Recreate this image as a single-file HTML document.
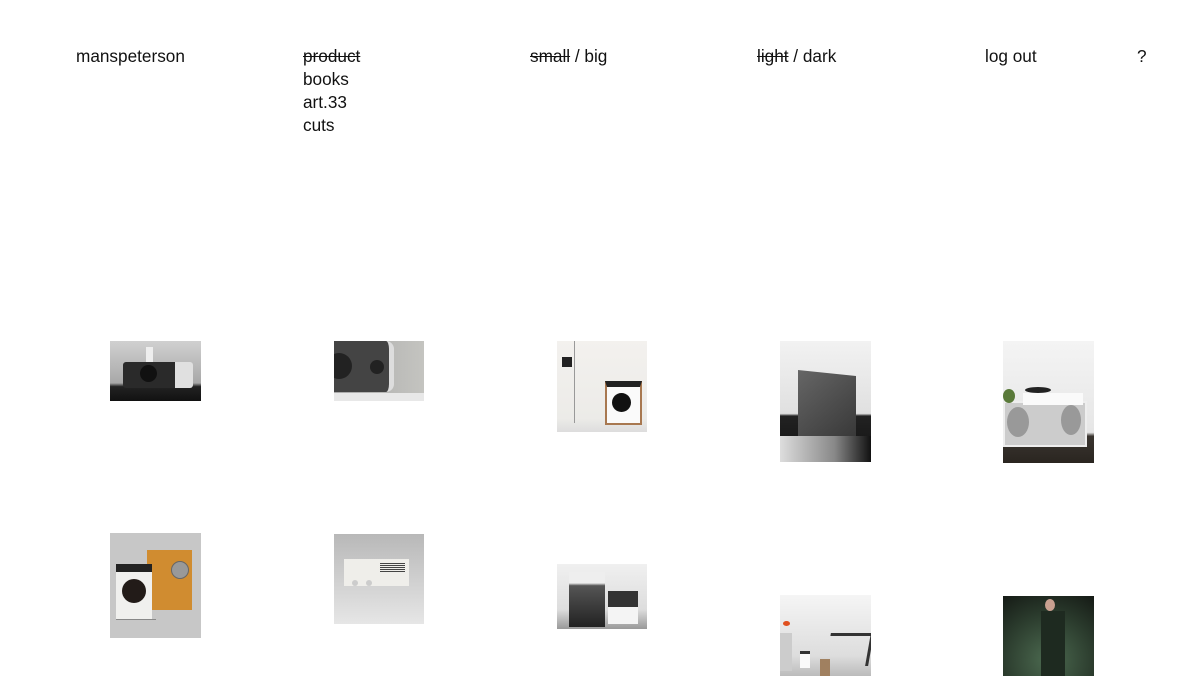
<!DOCTYPE html>
<html><head><meta charset="utf-8"><style>
body{margin:0;width:1200px;height:676px;background:#fff;overflow:hidden;position:relative;font-family:"Liberation Sans",sans-serif;font-size:17.2px;color:#111}
.t{position:absolute;line-height:23px}
s{text-decoration:line-through}
.i{position:absolute;overflow:hidden}
.i div{position:absolute}
</style></head><body>
<div class="t" style="left:76px;top:45px">manspeterson</div>
<div class="t" style="left:303px;top:45px"><s>product</s><br>books<br>art.33<br>cuts</div>
<div class="t" style="left:530px;top:45px"><s>small</s> / big</div>
<div class="t" style="left:757px;top:45px"><s>light</s> / dark</div>
<div class="t" style="left:985px;top:45px">log out</div>
<div class="t" style="left:1137px;top:45px">?</div>

<!-- 1 -->
<div class="i" style="left:110px;top:341px;width:91px;height:60px;background:linear-gradient(#d0d0d0,#a8a8a8 70%,#222 76%,#111)">
<div style="left:13px;top:21px;width:52px;height:26px;background:#2a2a2a;border-right:18px solid #e0e0e0;border-radius:3px"></div>
<div style="left:30px;top:24px;width:17px;height:17px;border-radius:50%;background:#111"></div>
<div style="left:36px;top:6px;width:7px;height:15px;background:#eee"></div>
</div>
<!-- 2 -->
<div class="i" style="left:334px;top:341px;width:90px;height:60px;background:linear-gradient(90deg,#aaa,#c4c4c0)">
<div style="left:0;top:0;width:55px;height:51px;background:#444;border-radius:0 8px 8px 0;border-right:5px solid #ddd"></div>
<div style="left:-8px;top:12px;width:26px;height:26px;border-radius:50%;background:#222"></div>
<div style="left:36px;top:19px;width:14px;height:14px;border-radius:50%;background:#222"></div>
<div style="left:0;top:52px;width:90px;height:8px;background:#e8e8e8"></div>
</div>
<!-- 3 -->
<div class="i" style="left:557px;top:341px;width:90px;height:91px;background:linear-gradient(#f3f1ee,#ecebe8 85%,#ddd)">
<div style="left:17px;top:0;width:1px;height:82px;background:#999"></div>
<div style="left:5px;top:16px;width:10px;height:10px;background:#222"></div>
<div style="left:48px;top:40px;width:33px;height:36px;background:#fafafa;border:2px solid #a87850;border-top:6px solid #222"></div>
<div style="left:55px;top:52px;width:19px;height:19px;border-radius:50%;background:#111"></div>
</div>
<!-- 4 -->
<div class="i" style="left:780px;top:341px;width:91px;height:121px;background:linear-gradient(#f2f2f2,#e0e0e0 60%,#222 62%,#111)">
<div style="left:18px;top:32px;width:58px;height:75px;background:linear-gradient(135deg,#666,#333);transform:skewY(6deg)"></div>
<div style="left:0;top:95px;width:91px;height:26px;background:linear-gradient(90deg,#ddd,#888 60%,#111)"></div>
</div>
<!-- 5 -->
<div class="i" style="left:1003px;top:341px;width:91px;height:122px;background:linear-gradient(#f4f4f4,#e6e6e6 75%,#3a3530 78%,#2a2520)">
<div style="left:0;top:60px;width:80px;height:42px;background:#ccc;border:2px solid #eee"></div>
<div style="left:4px;top:66px;width:22px;height:30px;border-radius:50%;background:#999"></div>
<div style="left:58px;top:64px;width:20px;height:30px;border-radius:50%;background:#999"></div>
<div style="left:20px;top:52px;width:60px;height:12px;background:#fafafa"></div>
<div style="left:22px;top:46px;width:26px;height:6px;border-radius:50%;background:#222"></div>
<div style="left:0;top:48px;width:12px;height:14px;background:#5a7a3a;border-radius:50%"></div>
</div>
<!-- 6 -->
<div class="i" style="left:110px;top:533px;width:91px;height:105px;background:#c7c7c7">
<div style="left:37px;top:17px;width:45px;height:60px;background:#d08c30"></div>
<div style="left:61px;top:28px;width:16px;height:16px;border-radius:50%;background:#999;border:1px solid #666"></div>
<div style="left:6px;top:31px;width:36px;height:47px;background:#f0f0ee;border-top:8px solid #222"></div>
<div style="left:12px;top:46px;width:24px;height:24px;border-radius:50%;background:#221b18"></div>
<div style="left:6px;top:86px;width:40px;height:1px;background:#888"></div>
</div>
<!-- 7 -->
<div class="i" style="left:334px;top:534px;width:90px;height:90px;background:linear-gradient(#b8b8b8,#e6e6e6)">
<div style="left:10px;top:25px;width:65px;height:27px;background:#efeeea"></div>
<div style="left:46px;top:29px;width:25px;height:10px;background:repeating-linear-gradient(#444 0 1px,transparent 1px 2px)"></div>
<div style="left:18px;top:46px;width:6px;height:6px;border-radius:50%;background:#ccc"></div>
<div style="left:32px;top:46px;width:6px;height:6px;border-radius:50%;background:#ccc"></div>
</div>
<!-- 8 -->
<div class="i" style="left:557px;top:564px;width:90px;height:65px;background:linear-gradient(#f0f0f0,#ddd 70%,#999)">
<div style="left:12px;top:8px;width:36px;height:55px;background:linear-gradient(#eee 20%,#555 25%,#222)"></div>
<div style="left:51px;top:27px;width:30px;height:16px;background:#333"></div>
<div style="left:51px;top:43px;width:30px;height:17px;background:#f4f4f4"></div>
</div>
<!-- 9 -->
<div class="i" style="left:780px;top:595px;width:91px;height:81px;background:linear-gradient(#f5f5f5,#ddd 75%,#bbb)">
<div style="left:3px;top:26px;width:7px;height:5px;background:#e05020;border-radius:50%"></div>
<div style="left:0;top:38px;width:12px;height:38px;background:#ccc"></div>
<div style="left:20px;top:56px;width:10px;height:14px;background:#fafafa;border-top:3px solid #333"></div>
<div style="left:48px;top:38px;width:40px;height:30px;border:3px solid #333;border-left:none;border-bottom:none;transform:skewX(-10deg)"></div>
<div style="left:40px;top:64px;width:10px;height:17px;background:#a08060"></div>
</div>
<!-- 10 -->
<div class="i" style="left:1003px;top:596px;width:91px;height:80px;background:radial-gradient(circle at 50% 80%,#4c6a50,#2a3a2c 60%,#151a15)">
<div style="left:42px;top:3px;width:10px;height:12px;border-radius:50%;background:#c9a090"></div>
<div style="left:38px;top:15px;width:24px;height:65px;background:#1e2a20"></div>
</div>
</body></html>
